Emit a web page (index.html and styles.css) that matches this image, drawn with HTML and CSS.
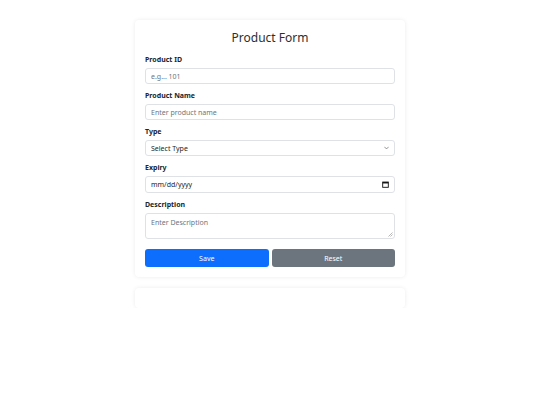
FILE: index.html
```html
<!DOCTYPE html>
<html>
<head>
<meta charset="utf-8">
<link rel="stylesheet" href="styles.css">
</head>
<body>
<div class="wrap">
  <form class="card">
    <h1 class="title">Product Form</h1>
    <div class="group">
      <label class="label">Product ID</label>
      <input class="control" type="text" placeholder="e.g... 101">
    </div>
    <div class="group">
      <label class="label">Product Name</label>
      <input class="control" type="text" placeholder="Enter product name">
    </div>
    <div class="group">
      <label class="label">Type</label>
      <div class="control select">
        <span>Select Type</span>
        <svg width="5" height="4" viewBox="0 0 16 10"><path d="M2 2l6 6 6-6" fill="none" stroke="#555" stroke-width="2" stroke-linecap="round" stroke-linejoin="round"/></svg>
      </div>
    </div>
    <div class="group">
      <label class="label">Expiry</label>
      <div class="control date">
        <span>mm/dd/yyyy</span>
        <svg width="7" height="7" viewBox="0 0 10 10"><rect x="1" y="1.5" width="8" height="7.5" fill="none" stroke="#111" stroke-width="1.3"/><rect x="1" y="1.5" width="8" height="2" fill="#111"/></svg>
      </div>
    </div>
    <div class="group">
      <label class="label">Description</label>
      <div class="control area">
        <span class="ph">Enter Description</span>
        <svg class="grip" width="5" height="5" viewBox="0 0 5 5"><path d="M4.5 0.5L0.5 4.5M4.5 2.5L2.5 4.5" stroke="#999" stroke-width="0.7"/></svg>
      </div>
    </div>
    <div class="buttons">
      <button type="button" class="btn save">Save</button>
      <button type="button" class="btn reset">Reset</button>
    </div>
  </form>
  <div class="card empty"></div>
</div>
</body>
</html>
```

FILE: styles.css
```css
* { box-sizing: border-box; }
html, body { margin: 0; background: #fff; }
body {
  font-family: "Noto Sans", "Open Sans", sans-serif;
  color: #212529;
  padding-top: 20px;
}
.wrap {
  width: 270px;
  margin: 0 auto;
}
.card {
  display: block;
  background: #fff;
  padding: 10px;
  border-radius: 4px;
  box-shadow: 0 0 4px rgba(0,0,0,0.08);
}
.title {
  margin: 0 0 10px;
  font-size: 12px;
  line-height: 15px;
  font-weight: 400;
  text-align: center;
  color: #2b2f33;
}
.group {
  display: flex;
  flex-direction: column;
  margin-bottom: 7px;
}
.label {
  font-size: 7px;
  line-height: 10px;
  font-weight: 700;
  margin-bottom: 3px;
}
.control {
  height: 16px;
  border: 1px solid #dee2e6;
  border-radius: 3px;
  padding: 0 5px;
  font: inherit;
  font-size: 7px;
  color: #212529;
  background: #fff;
  outline: none;
  display: flex;
  align-items: center;
  justify-content: space-between;
}
.control::placeholder { color: #6c757d; }
.date { height: 17px; }
.area {
  height: 26px;
  align-items: flex-start;
  padding-top: 4px;
  position: relative;
}
.ph { color: #6c757d; line-height: 9px; }
.grip { position: absolute; right: 1px; bottom: 1px; }
.buttons {
  display: flex;
  gap: 3px;
  margin-top: 10px;
}
.btn {
  flex: 1;
  height: 18px;
  border: none;
  border-radius: 3px;
  color: #fff;
  font: inherit;
  font-size: 7px;
}
.save { background: #0d6efd; }
.reset { background: #6c757d; }
.empty {
  margin-top: 11px;
  height: 20px;
}
```
